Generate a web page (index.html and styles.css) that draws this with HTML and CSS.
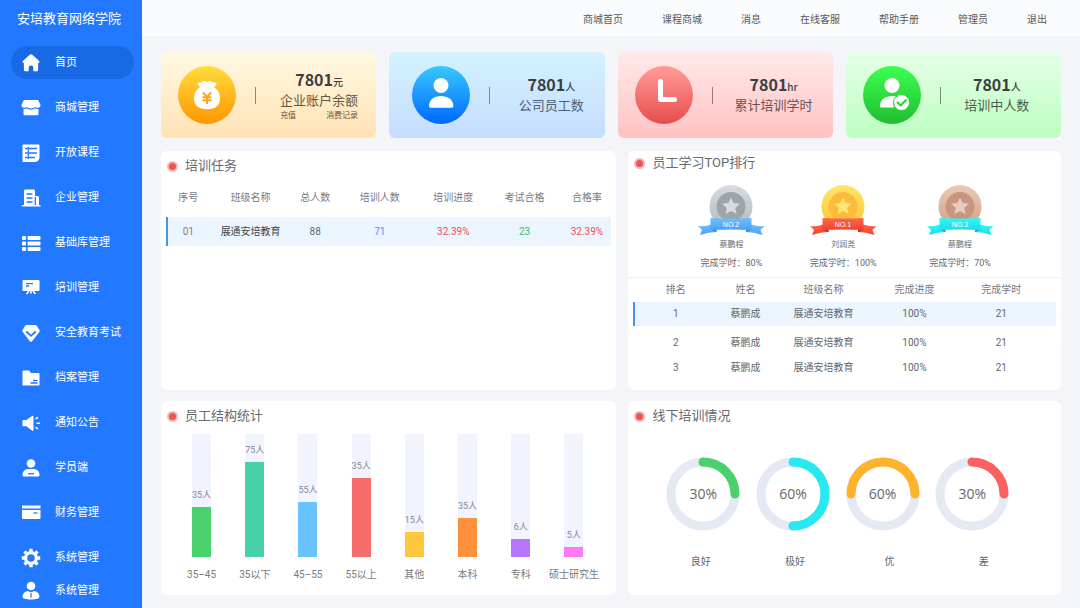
FILE: index.html
```html
<!DOCTYPE html>
<html lang="zh-CN">
<head>
<meta charset="utf-8">
<meta name="viewport" content="width=device-width, initial-scale=1">
<title>安培教育网络学院</title>
<link rel="stylesheet" href="styles.css">
</head>
<body>
<div class="app">
  <aside class="sidebar">
    <h1 class="brand">安培教育网络学院</h1>
    <nav class="menu">
      <a class="menu-item active" href="#"><svg class="menu-icon" viewBox="0 0 20 20"><path d="M10 1.300c.5 0 .9.2 1.300.5l6.600 6c1.100 1 .6 2.200-.6 2.200h-.2v6.800c0 .9-.6 1.500-1.500 1.500h-3.300v-3.500a2.300 2.300 0 0 0-4.600 0v3.500H4.400c-.9 0-1.500-.6-1.500-1.500V10h-.2c-1.200 0-1.700-1.200-.6-2.200l6.600-6c.4-.3.8-.5 1.300-.5z"/></svg><span>首页</span></a>
      <a class="menu-item" href="#"><svg class="menu-icon" viewBox="0 0 20 20"><path d="M3.800 2h12.400c.7 0 1.200.3 1.500.9L19.500 7c.3 1.500-.9 2.700-2.500 2.700-1.300 0-2.300-.5-3-.5-.8 0-1.800 1.300-4 1.300s-3.200-1.300-4-1.300c-.7 0-1.700.5-3 .5C1.400 9.700.2 8.500.5 7l1.800-4.100c.3-.6.8-.9 1.500-.9z"/><path d="M2.500 10.900c1.500.1 2.500-.5 3.400-.5 1.100 0 1.900 1.300 4.100 1.300s3-1.300 4.100-1.300c.9 0 1.900.6 3.400.5v5c0 .8-.6 1.400-1.400 1.400H3.900c-.8 0-1.400-.6-1.400-1.400z"/></svg><span>商城管理</span></a>
      <a class="menu-item" href="#"><svg class="menu-icon" viewBox="0 0 20 20"><path d="M2.500 1.500h15c.6 0 1 .4 1 1V14c0 3-2 5-5 5h-11c-.6 0-1-.4-1-1V2.500c0-.6.4-1 1-1z"/><path class="cut" d="M4 5.500h2.500M8 5.500h8M4 10h2.500M8 10h8M4 14.500h2.500M8 14.500h6M7.300 4v12"/></svg><span>开放课程</span></a>
      <a class="menu-item" href="#"><svg class="menu-icon" viewBox="0 0 20 20"><path d="M4.500 1.500h8c.8 0 1.500.7 1.500 1.500v5h2.500c.8 0 1.500.7 1.500 1.500V17h1.500v1.500H.8V17H3V3c0-.8.700-1.500 1.500-1.500z"/><path class="cut" d="M5.500 6h6M5.500 10h6M5.500 14h6M14.300 9v8"/></svg><span>企业管理</span></a>
      <a class="menu-item" href="#"><svg class="menu-icon" viewBox="0 0 20 20"><rect x="1" y="3" width="4" height="4" rx="1"/><rect x="1" y="8.500" width="4" height="4" rx="1"/><rect x="1" y="14" width="4" height="4" rx="1"/><rect x="6.500" y="3" width="13" height="4" rx="1"/><rect x="6.500" y="8.500" width="13" height="4" rx="1"/><rect x="6.500" y="14" width="13" height="4" rx="1"/></svg><span>基础库管理</span></a>
      <a class="menu-item" href="#"><svg class="menu-icon" viewBox="0 0 20 20"><rect x="1.500" y="2" width="17" height="11" rx="1"/><path class="line" d="M8 13l-2.500 3M12 13l2.500 3M10 13v2.500"/><path class="cut" d="M5 5.700h7M5 8h3"/></svg><span>培训管理</span></a>
      <a class="menu-item" href="#"><svg class="menu-icon" viewBox="0 0 20 20"><path d="M5.500 2h9c.6 0 1 .2 1.300.7l2.800 4.500c.3.500.3 1-.1 1.500l-7.400 9.600c-.6.800-1.600.8-2.200 0L1.500 8.700c-.4-.5-.4-1-.1-1.500l2.800-4.500c.3-.5.7-.7 1.300-.7z"/><path class="cut thick" d="M5.300 8.500l4.700 4.300 4.700-4.300"/></svg><span>安全教育考试</span></a>
      <a class="menu-item" href="#"><svg class="menu-icon" viewBox="0 0 20 20"><path d="M2.500 2.500H8l2 2.500h7.500c.6 0 1 .4 1 1v10.500c0 .6-.4 1-1 1h-15c-.6 0-1-.4-1-1v-13c0-.6.400-1 1-1z"/><path class="cut" d="M9.500 15h7M12 12.500h4.500"/></svg><span>档案管理</span></a>
      <a class="menu-item" href="#"><svg class="menu-icon" viewBox="0 0 20 20"><path d="M1.500 7h3.800L11 3c.8-.5 1.500 0 1.500.8v12.900c0 .8-.7 1.300-1.500.8l-5.700-4.200H1.500z"/><path class="line" d="M14.500 6l2.500-1.600M15.500 10.200h3.500M14.500 14.300l2.500 1.600"/></svg><span>通知公告</span></a>
      <a class="menu-item" href="#"><svg class="menu-icon" viewBox="0 0 20 20"><circle cx="10" cy="5.500" r="4.300"/><path d="M1.500 17c0-4 3-6 6-6h5c3 0 6 2 6 6 0 .9-.6 1.500-1.500 1.500H3c-.9 0-1.500-.6-1.500-1.500z"/><path class="cut" d="M7 15.700h6"/></svg><span>学员端</span></a>
      <a class="menu-item" href="#"><svg class="menu-icon" viewBox="0 0 20 20"><path d="M1 2.500h18.500v3H1zM1 7h18.500v8c0 .6-.4 1-1 1H2c-.6 0-1-.4-1-1z"/><path class="cut" d="M12.500 10h4"/></svg><span>财务管理</span></a>
      <a class="menu-item" href="#"><svg class="menu-icon" viewBox="0 0 20 20"><circle class="gear" cx="10" cy="10" r="5.400"/><path class="teeth" d="M10 .8v3.400M10 15.800v3.400M.8 10h3.400M15.800 10h3.400M3.500 3.500l2.400 2.400M14.100 14.100l2.400 2.400M16.500 3.500l-2.400 2.400M5.900 14.100l-2.400 2.400"/></svg><span>系统管理</span></a>
      <a class="menu-item" href="#"><svg class="menu-icon" viewBox="0 0 20 20"><circle cx="10" cy="5" r="4.300"/><path d="M6.500 10L10 11.200 13.500 10c3 .6 5 2.800 5 5.700 0 1.700-3.600 2.800-8.500 2.800s-8.500-1.100-8.500-2.800c0-2.900 2-5.100 5-5.700z"/><path class="cut" d="M10 12v4.500"/></svg><span>系统管理</span></a>
    </nav>
  </aside>

  <div class="page">
    <header class="topbar">
      <a href="#">商城首页</a><a href="#">课程商城</a><a href="#">消息</a><a href="#">在线客服</a><a href="#">帮助手册</a><a href="#">管理员</a><a href="#">退出</a>
    </header>

    <main class="content">
      <section class="stats">
        <article class="stat stat-balance">
          <svg class="stat-icon" viewBox="0 0 58 58"><defs><linearGradient id="gOrange" x2="0" y2="1"><stop stop-color="#ffdc3c"/><stop offset="1" stop-color="#ff9600"/></linearGradient></defs><circle cx="29" cy="29" r="29" fill="url(#gOrange)"/><path fill="#fff" d="M22 21c-1.500-1.300-2.500-2.300-2.200-3.500.3-1.300 2.200-1.700 3.700-1 1.500-1.900 4-1.900 5.500-.6 1.500-1.300 4.500-1.300 5.500.6 1.800-.7 3.700-.2 4 1.200.2 1.200-1 2.300-2.500 3.300 4 2.500 6 6.500 6 11.500 0 7-5 10.700-13 10.700s-13-3.700-13-10.700c0-5 2-9 6-11.500z"/><path fill="none" stroke="#ffa616" stroke-width="2" d="M25 26.500l4 4.500 4-4.500M24.500 31.300h9M24.500 34.300h9M29 31v7"/></svg>
          <div class="stat-text">
            <p class="stat-value">7801<small>元</small></p>
            <p class="stat-label">企业账户余额</p>
            <p class="stat-links"><a href="#">充值</a><a href="#">消费记录</a></p>
          </div>
        </article>
        <article class="stat stat-staff">
          <svg class="stat-icon" viewBox="0 0 58 58"><defs><linearGradient id="gBlue" x2="0" y2="1"><stop stop-color="#38c8ff"/><stop offset="1" stop-color="#0068ff"/></linearGradient></defs><circle cx="29" cy="29" r="29" fill="url(#gBlue)"/><circle cx="29" cy="19.500" r="7.500" fill="#fff"/><path fill="#fff" d="M17 40c0-6.500 5.500-10 12-10s12.300 3.500 12.300 10c0 1-.6 1.700-1.600 1.700H18.600c-1 0-1.600-.7-1.600-1.700z"/></svg>
          <div class="stat-text">
            <p class="stat-value">7801<small>人</small></p>
            <p class="stat-label">公司员工数</p>
          </div>
        </article>
        <article class="stat stat-hours">
          <svg class="stat-icon" viewBox="0 0 58 58"><defs><linearGradient id="gRed" x2="0" y2="1"><stop stop-color="#ff9c98"/><stop offset="1" stop-color="#e84c4c"/></linearGradient></defs><circle cx="29" cy="29" r="29" fill="url(#gRed)"/><path fill="none" stroke="#fff" stroke-width="5" stroke-linecap="round" stroke-linejoin="round" d="M25.500 15.500v18h14"/></svg>
          <div class="stat-text">
            <p class="stat-value">7801<small>hr</small></p>
            <p class="stat-label">累计培训学时</p>
          </div>
        </article>
        <article class="stat stat-training">
          <svg class="stat-icon" viewBox="0 0 58 58"><defs><linearGradient id="gGreen" x2="0" y2="1"><stop stop-color="#3dff50"/><stop offset="1" stop-color="#20bd30"/></linearGradient></defs><circle cx="29" cy="29" r="29" fill="url(#gGreen)"/><circle cx="29" cy="19.500" r="7.500" fill="#fff"/><path fill="#fff" d="M17 40.500c0-6.500 5-10.500 12-10.500 2.200 0 4 .4 5.500 1.200-4 2.300-5 6.500-3.500 10.300H18c-.6 0-1-.4-1-1z"/><circle cx="38.500" cy="36.500" r="8" fill="#fff" stroke="#2ad43b"/><path fill="none" stroke="#2ad43b" stroke-width="2" stroke-linecap="round" stroke-linejoin="round" d="M34.500 36.500l3 3 5.500-5.500"/></svg>
          <div class="stat-text">
            <p class="stat-value">7801<small>人</small></p>
            <p class="stat-label">培训中人数</p>
          </div>
        </article>
      </section>

      <div class="panels">
        <section class="panel">
          <h2 class="panel-title">培训任务</h2>
          <table class="grid-table tasks">
            <colgroup><col class="t-no"><col class="t-class"><col class="t-total"><col class="t-count"><col class="t-progress"><col class="t-pass"><col class="t-rate"></colgroup>
            <thead><tr><th>序号</th><th>班级名称</th><th>总人数</th><th>培训人数</th><th>培训进度</th><th>考试合格</th><th>合格率</th></tr></thead>
            <tbody><tr class="selected"><td class="muted">01</td><td class="strong">展通安培教育</td><td>88</td><td class="blue">71</td><td class="red">32.39%</td><td class="green">23</td><td class="red">32.39%</td></tr></tbody>
          </table>
        </section>

        <section class="panel panel-rank">
          <h2 class="panel-title">员工学习TOP排行</h2>
          <div class="medals">
            <div class="medal">
              <svg class="medal-art" viewBox="0 0 67 50"><defs><linearGradient id="mSilver" x2="0" y2="1"><stop stop-color="#d8dce0"/><stop offset="1" stop-color="#b4babf"/></linearGradient><linearGradient id="rBlue" x2="0" y2="1"><stop stop-color="#6cc0ff"/><stop offset="1" stop-color="#4aa0f4"/></linearGradient></defs><circle cx="33" cy="21.500" r="21.500" fill="url(#mSilver)"/><circle cx="33" cy="21.500" r="14.500" fill="#9ea5aa"/><path fill="#d8dce0" d="M33 12.500l2.600 5.600 6.200.7-4.600 4.200 1.300 6.100-5.500-3.100-5.500 3.100 1.300-6.100-4.600-4.200 6.200-.7z"/><path fill="url(#rBlue)" d="M0 41q7 .8 13-1.500l5.500 5.500v2q-8 .2-16.500 3l2-5zM66.500 41q-7 .8-13-1.500L48 45v2q8 .2 16.500 3l-2-5z"/><path fill="#2e82d8" d="M12.500 44.500h6V47zM54 44.500h-6V47z"/><path fill="url(#rBlue)" d="M12.500 33q20.500 1 41 0v12q-20.500-1-41 0z"/><text x="33" y="42" class="medal-no">NO.2</text></svg>
              <p class="medal-name">蔡鹏程</p><p class="medal-hours">完成学时：80%</p>
            </div>
            <div class="medal">
              <svg class="medal-art" viewBox="0 0 67 50"><defs><linearGradient id="mGold" x2="0" y2="1"><stop stop-color="#ffe469"/><stop offset="1" stop-color="#fbc832"/></linearGradient><linearGradient id="rRed" x2="0" y2="1"><stop stop-color="#ff6548"/><stop offset="1" stop-color="#ef432f"/></linearGradient></defs><circle cx="33" cy="21.500" r="21.500" fill="url(#mGold)"/><circle cx="33" cy="21.500" r="14.500" fill="#fdbb3d"/><path fill="#ffe56c" d="M33 12.500l2.600 5.600 6.200.7-4.600 4.200 1.300 6.100-5.500-3.100-5.500 3.100 1.300-6.100-4.600-4.200 6.200-.7z"/><path fill="url(#rRed)" d="M0 41q7 .8 13-1.500l5.500 5.500v2q-8 .2-16.500 3l2-5zM66.500 41q-7 .8-13-1.500L48 45v2q8 .2 16.500 3l-2-5z"/><path fill="#b92a20" d="M12.500 44.500h6V47zM54 44.500h-6V47z"/><path fill="url(#rRed)" d="M12.500 33q20.500 1 41 0v12q-20.500-1-41 0z"/><text x="33" y="42" class="medal-no">NO.1</text></svg>
              <p class="medal-name">刘润尧</p><p class="medal-hours">完成学时：100%</p>
            </div>
            <div class="medal">
              <svg class="medal-art" viewBox="0 0 67 50"><defs><linearGradient id="mBronze" x2="0" y2="1"><stop stop-color="#ebc9b4"/><stop offset="1" stop-color="#d2a089"/></linearGradient><linearGradient id="rCyan" x2="0" y2="1"><stop stop-color="#2ff8f4"/><stop offset="1" stop-color="#1cdcec"/></linearGradient></defs><circle cx="33" cy="21.500" r="21.500" fill="url(#mBronze)"/><circle cx="33" cy="21.500" r="14.500" fill="#c8967e"/><path fill="#e8ccc2" d="M33 12.500l2.600 5.600 6.200.7-4.600 4.200 1.300 6.100-5.500-3.100-5.500 3.100 1.300-6.100-4.600-4.200 6.200-.7z"/><path fill="url(#rCyan)" d="M0 41q7 .8 13-1.500l5.500 5.500v2q-8 .2-16.500 3l2-5zM66.500 41q-7 .8-13-1.500L48 45v2q8 .2 16.500 3l-2-5z"/><path fill="#12a4b4" d="M12.500 44.500h6V47zM54 44.500h-6V47z"/><path fill="url(#rCyan)" d="M12.500 33q20.500 1 41 0v12q-20.500-1-41 0z"/><text x="33" y="42" class="medal-no">NO.3</text></svg>
              <p class="medal-name">蔡鹏程</p><p class="medal-hours">完成学时：70%</p>
            </div>
          </div>
          <table class="grid-table ranks">
            <colgroup><col class="r-rank"><col class="r-name"><col class="r-class"><col class="r-progress"><col class="r-hours"></colgroup>
            <thead><tr><th>排名</th><th>姓名</th><th>班级名称</th><th>完成进度</th><th>完成学时</th></tr></thead>
            <tbody>
              <tr class="selected"><td>1</td><td>蔡鹏成</td><td>展通安培教育</td><td>100%</td><td>21</td></tr>
              <tr><td>2</td><td>蔡鹏成</td><td>展通安培教育</td><td>100%</td><td>21</td></tr>
              <tr><td>3</td><td>蔡鹏成</td><td>展通安培教育</td><td>100%</td><td>21</td></tr>
            </tbody>
          </table>
        </section>

        <section class="panel">
          <h2 class="panel-title">员工结构统计</h2>
          <ul class="bars">
            <li><div class="track"><span>35人</span><i class="c-green" style="height:41%"></i></div><b>35–45</b></li>
            <li><div class="track"><span>75人</span><i class="c-teal" style="height:77%"></i></div><b>35以下</b></li>
            <li><div class="track"><span>55人</span><i class="c-sky" style="height:45%"></i></div><b>45–55</b></li>
            <li><div class="track"><span>35人</span><i class="c-red" style="height:64%"></i></div><b>55以上</b></li>
            <li><div class="track"><span>15人</span><i class="c-yellow" style="height:20%"></i></div><b>其他</b></li>
            <li><div class="track"><span>35人</span><i class="c-orange" style="height:32%"></i></div><b>本科</b></li>
            <li><div class="track"><span>6人</span><i class="c-purple" style="height:15%"></i></div><b>专科</b></li>
            <li><div class="track"><span>5人</span><i class="c-pink" style="height:8%"></i></div><b>硕士研究生</b></li>
          </ul>
        </section>

        <section class="panel">
          <h2 class="panel-title">线下培训情况</h2>
          <div class="rings">
            <div class="ring"><svg viewBox="0 0 74 74"><circle cx="37" cy="37" r="32"/><path stroke="#4ad06c" d="M37 5a32 32 0 0 1 32 32"/></svg><span>30%</span></div>
            <div class="ring"><svg viewBox="0 0 74 74"><circle cx="37" cy="37" r="32"/><path stroke="#28e8f0" d="M37 5a32 32 0 0 1 0 64"/></svg><span>60%</span></div>
            <div class="ring"><svg viewBox="0 0 74 74"><circle cx="37" cy="37" r="32"/><path stroke="#ffb22c" d="M5 37a32 32 0 0 1 64 0"/></svg><span>60%</span></div>
            <div class="ring"><svg viewBox="0 0 74 74"><circle cx="37" cy="37" r="32"/><path stroke="#fd6060" d="M37 5a32 32 0 0 1 32 32"/></svg><span>30%</span></div>
          </div>
          <div class="ring-labels"><span>良好</span><span>极好</span><span>优</span><span>差</span></div>
        </section>
      </div>
    </main>
  </div>
</div>
</body>
</html>
```
FILE: styles.css
```css
*, *::before { box-sizing: border-box; margin: 0; padding: 0; }

body {
  background: #f3f5f9;
  color: #64676c;
  font-family: Roboto, "Noto Sans CJK SC", sans-serif;
  font-size: 10px;
  line-height: 16px;
}

a { color: inherit; text-decoration: none; }
ul { list-style: none; }

.app { display: flex; min-height: 100vh; }

/* Sidebar */
.sidebar { flex: 0 0 142px; padding: 0 8px 0 11px; background: #2278ff; color: #fff; }
.brand { margin-bottom: 8px; padding-left: 6px; font-size: 13px; font-weight: 400; line-height: 38px; white-space: nowrap; }
.menu { display: flex; flex-direction: column; }
.menu-item {
  display: flex;
  align-items: center;
  gap: 14px;
  height: 33px;
  margin-bottom: 12px;
  padding-left: 10px;
  border-radius: 17px;
  font-size: 11px;
  white-space: nowrap;
}
.menu-item.active { background: #176ae4; }
.menu-item:nth-last-child(-n+2) { margin-bottom: 0; }
.menu-icon { flex: none; width: 20px; height: 20px; fill: #fff; }
.menu-icon .cut { fill: none; stroke: #2278ff; stroke-width: 1.3; }
.menu-icon .thick { stroke-width: 1.8; }
.menu-icon .line { fill: none; stroke: #fff; stroke-width: 1.6; }
.menu-icon .gear { fill: none; stroke: #fff; stroke-width: 3.2; }
.menu-icon .teeth { fill: none; stroke: #fff; stroke-width: 3.4; }

/* Page frame */
.page { flex: 1; min-width: 0; }
.topbar {
  display: flex;
  justify-content: flex-end;
  align-items: center;
  gap: 39px;
  height: 36px;
  padding: 4px 33px 0 0;
  background: #fafbfc;
  color: #55585c;
}
.content { padding: 16px 19px 13px; }

/* Summary cards */
.stats { display: grid; grid-template-columns: repeat(4, 1fr); gap: 13px; margin-bottom: 13px; }
.stat { display: flex; align-items: center; height: 86px; padding-left: 17px; border-radius: 6px; }
.stat-icon { flex: none; width: 58px; height: 58px; }
.stat::before { content: ""; order: 1; width: 1px; height: 17px; margin-left: 19px; background: currentColor; opacity: .7; }
.stat-text { order: 2; flex: 1; display: flex; flex-direction: column; align-items: center; }
.stat-value { color: #3c3f42; font-family: "Noto Sans CJK SC", sans-serif; font-size: 16px; font-weight: 700; line-height: 18px; }
.stat-value small { font-size: 10px; font-weight: 500; }
.stat-label { font-size: 13px; line-height: 20px; }
.stat-links { display: flex; justify-content: space-between; width: 78px; font-size: 8px; line-height: 10px; }
.stat-balance { background: linear-gradient(#fff9e2, #ffe2b4); color: #65563f; }
.stat-balance .stat-text { padding-left: 6px; }
.stat-staff { padding-left: 23px; background: linear-gradient(#d4f2ff, #c4ddff); color: #4e6075; }
.stat-staff .stat-text { padding-left: 8px; }
.stat-hours { background: linear-gradient(#ffeaea, #ffc2c2); color: #705050; }
.stat-hours .stat-text { padding-left: 2px; }
.stat-training { background: linear-gradient(#e6ffe8, #bcffc0); color: #466049; }
.stat-training .stat-text { padding-right: 8px; }

/* Panels */
.panels { display: grid; grid-template-columns: 456fr 433fr; gap: 11px 12px; }
.panel { min-width: 0; padding: 6px 5px 12px; border-radius: 6px; background: #fff; }
.panel-rank { padding-top: 3px; padding-bottom: 10px; }
.panel-title { display: flex; align-items: center; gap: 7px; padding-left: 1px; color: #66696d; font-size: 13px; font-weight: 400; line-height: 18px; }
.panel-title::before { content: ""; width: 11px; height: 11px; border: 2px solid #f9b4b4; border-radius: 50%; background: #ea5558; }

/* Tables */
.grid-table { width: 100%; border-collapse: collapse; table-layout: fixed; text-align: center; white-space: nowrap; }
.grid-table th { color: #777a7f; font-weight: 400; }
.selected { background: #ebf5ff; }
.selected td:first-child { box-shadow: inset 2px 0 #4b93e0; }
.muted { color: #7c8086; }
.strong { color: #3f4347; }
.blue { color: #4b94ee; }
.red { color: #ee4b5b; }
.green { color: #3cbc68; }

.tasks { margin-top: 4px; }
.tasks th { height: 38px; }
.tasks td { height: 29px; }
.t-no { width: 10%; }
.t-class { width: 18%; }
.t-total { width: 11%; }
.t-count { width: 18%; }
.t-progress { width: 15%; }
.t-pass { width: 17%; }
.t-rate { width: 11%; }

.ranks th, .ranks td { height: 24px; }
.ranks tr + tr td { height: 25px; }
.ranks .selected + tr td { height: 29px; padding-top: 4px; }
.ranks tr > :last-child { padding-right: 8px; }
.r-rank { width: 20%; }
.r-name { width: 13%; }
.r-class { width: 24%; }
.r-progress { width: 19%; }
.r-hours { width: 24%; }

/* Medals */
.medals {
  display: grid;
  grid-template-columns: 112fr 112fr 122fr;
  margin: 13px -5px 0;
  padding: 0 40px 8px 47px;
  border-bottom: 1px solid #eef0f3;
  font-size: 8px;
  line-height: 12px;
  text-align: center;
  white-space: nowrap;
}
.medal-art { display: block; width: 67px; height: 50px; margin: 0 auto 4px; }
.medal-no { fill: #fff; font-family: "Liberation Sans", sans-serif; font-size: 7px; text-anchor: middle; }
.medal-hours { margin-top: 6px; font-size: 9px; }

/* Bar chart */
.bars { display: grid; grid-template-columns: repeat(8, 1fr); margin-top: 9px; padding: 0 11px 0 9px; }
.bars li { display: flex; flex-direction: column; align-items: center; min-width: 0; }
.track { display: flex; flex-direction: column; justify-content: flex-end; align-items: center; width: 19px; height: 123px; background: #f1f3ff; }
.track span { margin-bottom: 6px; color: #85899a; font-size: 9px; line-height: 12px; white-space: nowrap; }
.track i { flex: none; width: 100%; }
.bars b { margin-top: 10px; color: #777a80; font-weight: 400; white-space: nowrap; }
.c-green { background: #4ad06c; }
.c-teal { background: #48d0a8; }
.c-sky { background: #6ac2ff; }
.c-red { background: #f56c6a; }
.c-yellow { background: #ffc83c; }
.c-orange { background: #ff903c; }
.c-purple { background: #b676ff; }
.c-pink { background: #ff7af0; }

/* Ring charts */
.rings, .ring-labels { display: grid; grid-template-columns: repeat(4, 1fr); text-align: center; }
.rings { margin: 32px 39px 0 25px; }
.ring { display: grid; place-items: center; }
.ring > * { grid-area: 1 / 1; }
.ring svg { width: 74px; height: 74px; fill: none; stroke-width: 9; stroke-linecap: round; }
.ring circle { stroke: #e4e9f4; }
.ring span { color: #65686c; font-family: "Open Sans", "Noto Sans", sans-serif; font-size: 14px; }
.ring-labels { margin: 23px 25px 0 20px; }
```
